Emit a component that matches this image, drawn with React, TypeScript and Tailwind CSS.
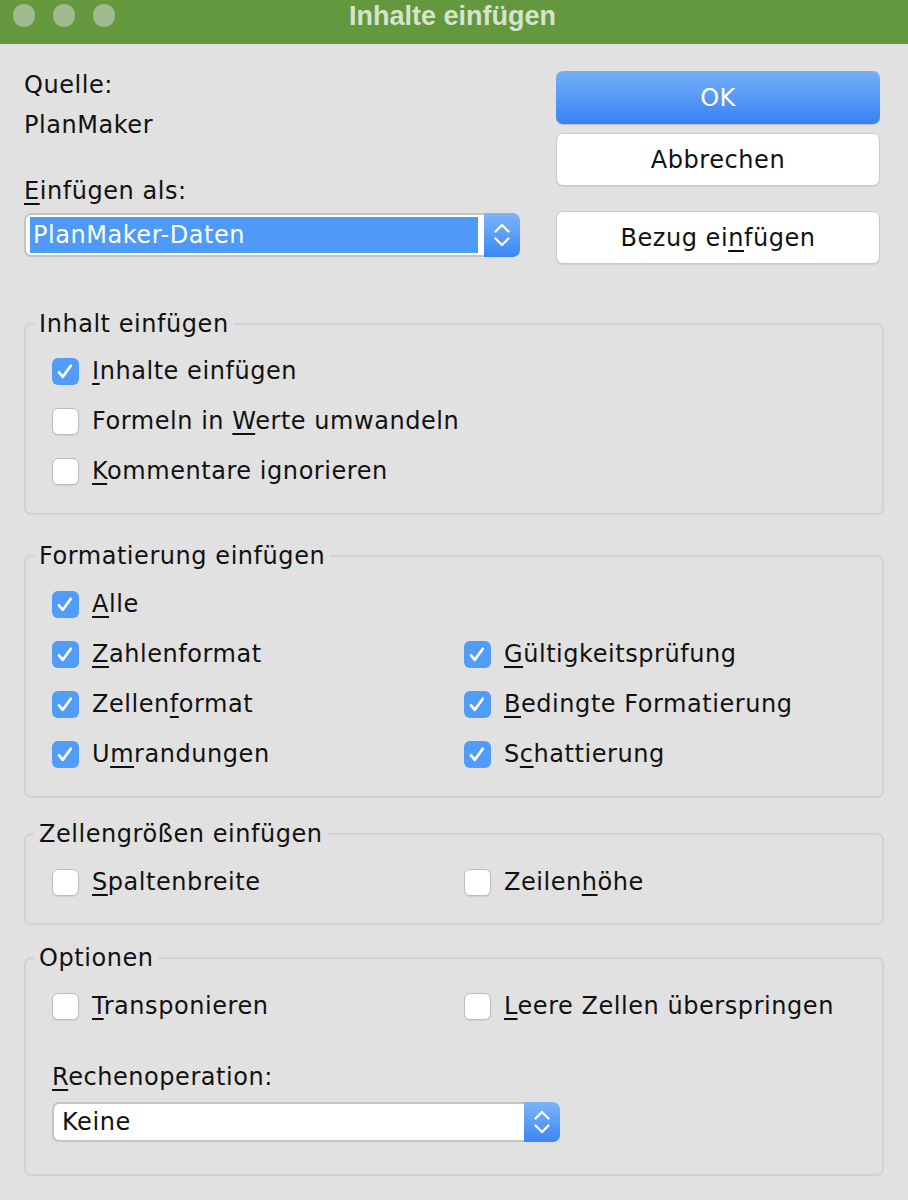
import React from "react";

type LabelProps = {
  pre?: string;
  u: string;
  post?: string;
};

function Mnemonic({ pre = "", u, post = "" }: LabelProps) {
  return (
    <span>
      {pre}
      <u className="underline decoration-[2px] underline-offset-[4px]">{u}</u>
      {post}
    </span>
  );
}

function Check({ checked }: { checked?: boolean }) {
  if (checked) {
    return (
      <span className="flex h-[27px] w-[27px] shrink-0 items-center justify-center rounded-[6px] bg-[#519cf6]">
        <svg width="27" height="27" viewBox="0 0 27 27">
          <path
            d="M7 14.3l3.8 4.5 8-11"
            fill="none"
            stroke="white"
            strokeWidth="2.7"
            strokeLinecap="round"
            strokeLinejoin="round"
          />
        </svg>
      </span>
    );
  }
  return (
    <span className="h-[27px] w-[27px] shrink-0 rounded-[6px] border border-[#bcbcbc] bg-white shadow-[0_1px_1px_rgba(0,0,0,0.08)]" />
  );
}

function Row({ checked, children }: { checked?: boolean; children: React.ReactNode }) {
  return (
    <div className="flex h-[50px] items-center gap-[13px]">
      <Check checked={checked} />
      {children}
    </div>
  );
}

function Stepper({ h }: { h: string }) {
  return (
    <div
      className={`flex w-[36px] shrink-0 items-center justify-center rounded-r-[7px] bg-gradient-to-b from-[#7cb4f8] to-[#3a86f5] ${h}`}
    >
      <svg width="18" height="26" viewBox="0 0 18 26">
        <path
          d="M2.5 9.5L9 3l6.5 6.5M2.5 16.5L9 23l6.5-6.5"
          fill="none"
          stroke="white"
          strokeWidth="2.3"
          strokeLinecap="round"
          strokeLinejoin="round"
        />
      </svg>
    </div>
  );
}

function Group({
  title,
  className,
  children,
}: {
  title: string;
  className: string;
  children: React.ReactNode;
}) {
  return (
    <fieldset
      className={`mx-[24px] rounded-[7px] border-2 border-[#d3d3d3] p-0 ${className}`}
    >
      <legend className="ml-[8px] px-[5px] leading-[30px]">{title}</legend>
      {children}
    </fieldset>
  );
}

export default function App() {
  return (
    <div
      className="min-h-[1200px] w-[908px] bg-[#e1e1e1] text-[24px] tracking-[0.55px] text-[#111]"
      style={{ fontFamily: '"DejaVu Sans", "Open Sans", sans-serif' }}
    >
      {/* title bar */}
      <div className="flex h-[44px] items-start bg-[#64983f]">
        <div className="flex gap-[18px] pl-[13px] pt-[4px]">
          <span className="h-[23px] w-[22px] rounded-full bg-[#9fbb8f]" />
          <span className="h-[23px] w-[22px] rounded-full bg-[#9fbb8f]" />
          <span className="h-[23px] w-[22px] rounded-full bg-[#9fbb8f]" />
        </div>
        <div
          className="flex-1 pr-[118px] text-center text-[27px] font-bold leading-[32px] tracking-normal text-[#d6e4cb]"
          style={{ fontFamily: '"Liberation Sans", Arial, sans-serif' }}
        >
          Inhalte einfügen
        </div>
      </div>

      {/* top area */}
      <div className="flex gap-[36px] pl-[24px] pr-[28px]">
        <div className="flex w-[496px] flex-col pt-[26px]">
          <div className="leading-[30px]">Quelle:</div>
          <div className="mt-[10px] leading-[30px]">PlanMaker</div>
          <div className="mt-[36px] leading-[30px]">
            <Mnemonic u="E" post="infügen als:" />
          </div>
          <div className="mt-[7px] flex h-[44px]">
            <div className="flex flex-1 rounded-l-[7px] border-2 border-r-0 border-[#c3c3c3] bg-white py-[2px] pl-[4px] pr-[6px]">
              <div className="flex flex-1 items-center bg-[#4e9af8] px-[3px] text-white">
                PlanMaker-Daten
              </div>
            </div>
            <Stepper h="h-[44px]" />
          </div>
        </div>
        <div className="flex w-[324px] flex-col pt-[27px]">
          <div className="flex h-[53px] items-center justify-center rounded-[7px] bg-gradient-to-b from-[#74aff8] to-[#3682f3] text-white shadow-[0_1px_1px_rgba(0,0,0,0.15)]">
            OK
          </div>
          <div className="mt-[9px] flex h-[53px] items-center justify-center rounded-[7px] border border-[#c9c9c9] bg-white shadow-[0_1px_1px_rgba(0,0,0,0.08)]">
            Abbrechen
          </div>
          <div className="mt-[25px] flex h-[53px] items-center justify-center rounded-[7px] border border-[#c9c9c9] bg-white shadow-[0_1px_1px_rgba(0,0,0,0.08)]">
            <Mnemonic pre="Bezug ei" u="n" post="fügen" />
          </div>
        </div>
      </div>

      <Group title="Inhalt einfügen" className="mt-[45px]">
        <div className="px-[26px] pb-[17px] pt-[7px]">
          <Row checked>
            <Mnemonic u="I" post="nhalte einfügen" />
          </Row>
          <Row>
            <Mnemonic pre="Formeln in " u="W" post="erte umwandeln" />
          </Row>
          <Row>
            <Mnemonic u="K" post="ommentare ignorieren" />
          </Row>
        </div>
      </Group>

      <Group title="Formatierung einfügen" className="mt-[26px]">
        <div className="px-[26px] pb-[17px] pt-[8px]">
          <Row checked>
            <Mnemonic u="A" post="lle" />
          </Row>
          <div className="grid grid-cols-[412px_1fr]">
            <Row checked>
              <Mnemonic u="Z" post="ahlenformat" />
            </Row>
            <Row checked>
              <Mnemonic u="G" post="ültigkeitsprüfung" />
            </Row>
            <Row checked>
              <Mnemonic pre="Zellen" u="f" post="ormat" />
            </Row>
            <Row checked>
              <Mnemonic u="B" post="edingte Formatierung" />
            </Row>
            <Row checked>
              <Mnemonic pre="U" u="m" post="randungen" />
            </Row>
            <Row checked>
              <Mnemonic pre="S" u="c" post="hattierung" />
            </Row>
          </div>
        </div>
      </Group>

      <Group title="Zellengrößen einfügen" className="mt-[21px]">
        <div className="grid grid-cols-[412px_1fr] px-[26px] pb-[16px] pt-[8px]">
          <Row>
            <Mnemonic u="S" post="paltenbreite" />
          </Row>
          <Row>
            <Mnemonic pre="Zeilen" u="h" post="öhe" />
          </Row>
        </div>
      </Group>

      <Group title="Optionen" className="mt-[18px]">
        <div className="px-[26px] pb-[32px] pt-[8px]">
          <div className="grid grid-cols-[412px_1fr]">
            <Row>
              <Mnemonic u="T" post="ransponieren" />
            </Row>
            <Row>
              <Mnemonic u="L" post="eere Zellen überspringen" />
            </Row>
          </div>
          <div className="mt-[31px] leading-[30px]">
            <Mnemonic u="R" post="echenoperation:" />
          </div>
          <div className="mt-[10px] flex h-[40px] w-[508px]">
            <div className="flex flex-1 items-center rounded-l-[7px] border-2 border-r-0 border-[#c3c3c3] bg-white pl-[8px]">
              Keine
            </div>
            <Stepper h="h-[40px]" />
          </div>
        </div>
      </Group>
    </div>
  );
}
